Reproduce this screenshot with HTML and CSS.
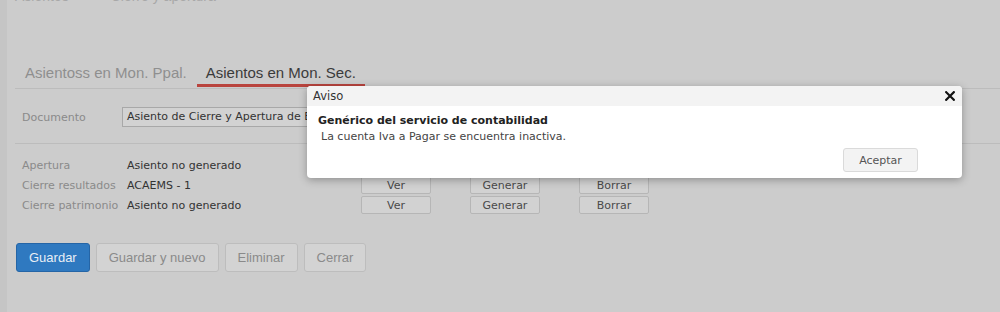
FILE: index.html
```html
<!DOCTYPE html>
<html lang="es">
<head>
    <meta charset="UTF-8">
    <title>Asientos de cierre</title>
    <link rel="stylesheet" href="styles.css">
</head>
<body>

    <div class="page">
        <!-- Cabecera (cortada arriba) -->
        <div class="header">
            <span class="header-title">Asientos</span>
            <span class="header-sub">Cierre y apertura</span>
        </div>

        <!-- Pestañas -->
        <div class="tabs">
            <div class="tab">Asientoss en Mon. Ppal.</div>
            <div class="tab active">Asientos en Mon. Sec.</div>
        </div>

        <div class="doc-row">
            <span class="label">Documento</span>
            <div class="select">Asiento de Cierre y Apertura de Ejercicio</div>
        </div>

        <div class="rows">
            <div class="row">
                <span class="label">Apertura</span>
                <span class="value">Asiento no generado</span>
                <button class="small-btn">Ver</button>
                <button class="small-btn">Generar</button>
                <button class="small-btn">Borrar</button>
            </div>
            <div class="row">
                <span class="label">Cierre resultados</span>
                <span class="value">ACAEMS - 1</span>
                <button class="small-btn">Ver</button>
                <button class="small-btn">Generar</button>
                <button class="small-btn">Borrar</button>
            </div>
            <div class="row">
                <span class="label">Cierre patrimonio</span>
                <span class="value">Asiento no generado</span>
                <button class="small-btn">Ver</button>
                <button class="small-btn">Generar</button>
                <button class="small-btn">Borrar</button>
            </div>
        </div>

        <div class="actions">
            <button class="btn primary">Guardar</button>
            <button class="btn">Guardar y nuevo</button>
            <button class="btn">Eliminar</button>
            <button class="btn">Cerrar</button>
        </div>
    </div>

    <!-- Diálogo de aviso -->
    <div class="dialog">
        <div class="dialog-header">
            <span>Aviso</span>
            <svg class="close" width="10" height="10" viewBox="0 0 10 10">
                <path d="M1.2 1.2 L8.8 8.8 M8.8 1.2 L1.2 8.8" stroke="#111" stroke-width="2.2" stroke-linecap="square"/>
            </svg>
        </div>
        <div class="dialog-body">
            <div class="dialog-title">Genérico del servicio de contabilidad</div>
            <div class="dialog-msg">La cuenta Iva a Pagar se encuentra inactiva.</div>
            <div class="dialog-footer">
                <button class="accept">Aceptar</button>
            </div>
        </div>
    </div>

</body>
</html>
```

FILE: styles.css
```css
html, body {
    height: 100%;
}

body {
    margin: 0;
    box-sizing: border-box;
    border-left: 7px solid #c5c5c5;
    background-color: #cccccc;
    font-family: "DejaVu Sans", Verdana, sans-serif;
    overflow: hidden;
}

.page {
    display: flow-root;
    padding-left: 8px;
}

.header {
    height: 14px;
    margin-top: -11px;
    display: flex;
    gap: 42px;
    font-family: "Liberation Sans", Arial, sans-serif;
    font-size: 14px;
    color: #a8a8a8;
    line-height: 14px;
}

.tabs {
    display: flex;
    margin-top: 61px;
    padding-bottom: 1px;
    border-bottom: 1px solid #bcbcbc;
    font-family: "Liberation Sans", Arial, sans-serif;
    font-size: 15px;
}

.tab {
    padding: 0 10px 3px 10px;
    line-height: 17px;
    color: #8f8f8f;
    border-bottom: 3px solid transparent;
}

.tab.active {
    padding: 0 9px 3px 9px;
    color: #3b3b3b;
    border-bottom-color: #b9443e;
}

.label {
    color: #8a8a8a;
}

.doc-row {
    display: flex;
    align-items: center;
    margin-top: 18px;
    padding: 0 0 16px 7px;
    border-bottom: 1px solid #bcbcbc;
    font-size: 11px;
}

.doc-row .label {
    width: 100px;
}

.select {
    width: 500px;
    height: 18px;
    line-height: 18px;
    padding-left: 4px;
    border: 1px solid #a8a8a8;
    background-color: #d2d2d2;
    color: #333;
    white-space: nowrap;
    overflow: hidden;
}

.rows {
    padding: 11px 0 0 7px;
    font-size: 11px;
}

.row {
    display: flex;
    align-items: center;
    height: 20px;
}

.row .label {
    width: 105px;
}

.row .value {
    width: 234px;
    color: #333;
}

.small-btn {
    width: 70px;
    height: 18px;
    margin-right: 39px;
    padding: 0;
    border: 1px solid #b6b6b6;
    border-radius: 2px;
    background-color: #d2d2d2;
    color: #4a4a4a;
    font-family: "DejaVu Sans", Verdana, sans-serif;
    font-size: 11px;
}

.actions {
    display: flex;
    gap: 6px;
    margin-top: 28px;
    padding-left: 1px;
}

.btn {
    height: 29px;
    padding: 0 12px;
    border: 1px solid #bdbdbd;
    border-radius: 3px;
    background-color: #d3d3d3;
    color: #8a8a8a;
    font-family: "Liberation Sans", Arial, sans-serif;
    font-size: 13px;
}

.btn.primary {
    padding: 0 12px;
    background-color: #2f79c0;
    border-color: #2565a6;
    color: #e8eef5;
}

/* Diálogo */
.dialog {
    position: absolute;
    left: 307px;
    top: 86px;
    width: 655px;
    height: 92px;
    background-color: #fff;
    border-radius: 4px;
    box-shadow: 0 2px 8px rgba(0, 0, 0, 0.3);
    overflow: hidden;
}

.dialog-header {
    display: flex;
    justify-content: space-between;
    align-items: center;
    height: 20px;
    padding: 0 7px 0 6px;
    background-color: #f3f3f3;
    font-size: 11.5px;
    color: #333;
}

.dialog-body {
    padding: 8px 44px 0 11px;
    font-size: 11px;
}

.dialog-title {
    font-weight: bold;
    color: #222;
    line-height: 13px;
}

.dialog-msg {
    padding-left: 3px;
    margin-top: 3px;
    color: #444;
    line-height: 13px;
}

.dialog-footer {
    display: flex;
    justify-content: flex-end;
    margin-top: 5px;
}

.accept {
    width: 75px;
    height: 24px;
    border: 1px solid #dadada;
    border-radius: 3px;
    background-color: #f3f3f3;
    color: #555;
    font-family: "DejaVu Sans", Verdana, sans-serif;
    font-size: 11px;
}
```
